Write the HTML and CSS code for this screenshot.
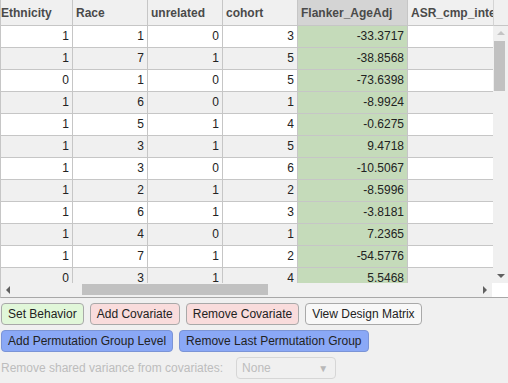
FILE: index.html
```html
<!DOCTYPE html>
<html lang="en">
<head>
  <meta charset="UTF-8">
  <title>Design</title>
  <link rel="stylesheet" href="styles.css">
</head>
<body>
  <div class="grid">
    <div class="grid-body">
      <div class="viewport">
        <table class="data">
          <colgroup>
            <col class="c-narrow1">
            <col class="c-mid">
            <col class="c-mid">
            <col class="c-mid">
            <col class="c-wide">
            <col class="c-last">
          </colgroup>
          <thead>
            <tr>
              <th class="first">Ethnicity</th>
              <th>Race</th>
              <th>unrelated</th>
              <th>cohort</th>
              <th class="sel">Flanker_AgeAdj</th>
              <th>ASR_cmp_internalizing</th>
            </tr>
          </thead>
          <tbody>
            <tr><td>1</td><td>1</td><td>0</td><td>3</td><td class="sel">-33.3717</td><td></td></tr>
            <tr><td>1</td><td>7</td><td>1</td><td>5</td><td class="sel">-38.8568</td><td></td></tr>
            <tr><td>0</td><td>1</td><td>0</td><td>5</td><td class="sel">-73.6398</td><td></td></tr>
            <tr><td>1</td><td>6</td><td>0</td><td>1</td><td class="sel">-8.9924</td><td></td></tr>
            <tr><td>1</td><td>5</td><td>1</td><td>4</td><td class="sel">-0.6275</td><td></td></tr>
            <tr><td>1</td><td>3</td><td>1</td><td>5</td><td class="sel">9.4718</td><td></td></tr>
            <tr><td>1</td><td>3</td><td>0</td><td>6</td><td class="sel">-10.5067</td><td></td></tr>
            <tr><td>1</td><td>2</td><td>1</td><td>2</td><td class="sel">-8.5996</td><td></td></tr>
            <tr><td>1</td><td>6</td><td>1</td><td>3</td><td class="sel">-3.8181</td><td></td></tr>
            <tr><td>1</td><td>4</td><td>0</td><td>1</td><td class="sel">7.2365</td><td></td></tr>
            <tr><td>1</td><td>7</td><td>1</td><td>2</td><td class="sel">-54.5776</td><td></td></tr>
            <tr><td>0</td><td>3</td><td>1</td><td>4</td><td class="sel">5.5468</td><td></td></tr>
          </tbody>
        </table>
      </div>
      <div class="vscroll">
        <div class="vs-head"></div>
        <div class="sb-btn"><span class="arrow up"></span></div>
        <div class="vs-track"><div class="vs-thumb"></div></div>
        <div class="sb-btn"><span class="arrow down"></span></div>
      </div>
    </div>
    <div class="hscroll">
      <div class="sb-btn"><span class="arrow left"></span></div>
      <div class="hs-track"><div class="hs-thumb"></div></div>
      <div class="sb-btn"><span class="arrow right"></span></div>
      <div class="corner"></div>
    </div>
  </div>

  <div class="controls">
    <div class="btn-row">
      <button class="btn green">Set Behavior</button>
      <button class="btn pink">Add Covariate</button>
      <button class="btn pink">Remove Covariate</button>
      <button class="btn plain">View Design Matrix</button>
    </div>
    <div class="btn-row">
      <button class="btn blue">Add Permutation Group Level</button>
      <button class="btn blue">Remove Last Permutation Group</button>
    </div>
    <div class="option-row">
      <span class="label">Remove shared variance from covariates:</span>
      <div class="select">
        <span>None</span>
        <span class="caret">&#9660;</span>
      </div>
    </div>
  </div>
</body>
</html>
```

FILE: styles.css
```css
* {
  margin: 0;
  padding: 0;
  box-sizing: border-box;
}
body {
  width: 508px;
  height: 383px;
  overflow: hidden;
  background: #f0f0f0;
  font: 12px "Liberation Sans", Arial, sans-serif;
  color: #222;
}

/* table */
.grid {
  border-left: 1px solid #c6c6c6;
  border-bottom: 1px solid #a8a8a8;
}
.grid-body {
  display: flex;
  height: 283px;
}
.viewport {
  width: 492px;
  overflow: hidden;
  background: #fff;
}
.data {
  table-layout: fixed;
  border-collapse: separate;
  border-spacing: 0;
  width: 527px;
}
.c-narrow1 { width: 72px; }
.c-mid { width: 75px; }
.c-wide { width: 110px; }
.c-last { width: 120px; }

.data th {
  height: 26px;
  background: #f0f0f0;
  color: #4a4a4a;
  font-weight: bold;
  text-align: left;
  padding: 0 3px;
  white-space: nowrap;
  overflow: hidden;
  border-right: 1px solid #c6c6c6;
  border-bottom: 1px solid #c6c6c6;
}
.data th.first {
  padding-left: 0;
}
.data th.sel {
  background: #d4d4d4;
}
.data td {
  height: 22px;
  line-height: 21px;
  text-align: right;
  padding: 0 3px;
  color: #222;
  border-right: 1px solid #c6c6c6;
  border-bottom: 1px solid #c6c6c6;
}
.data tbody tr:nth-child(even) td {
  background: #f0f0f0;
}
.data td.sel,
.data tbody tr:nth-child(even) td.sel {
  background: #c5dbba;
}

/* scrollbars */
.vscroll {
  width: 15px;
  display: flex;
  flex-direction: column;
  background: #f0f0f0;
}
.vs-head {
  height: 26px;
  border-left: 1px solid #d4d4d4;
  border-bottom: 1px solid #c6c6c6;
}
.sb-btn {
  width: 15px;
  height: 14px;
  display: flex;
  align-items: center;
  justify-content: center;
}
.vs-track {
  flex: 1;
  padding: 1px 0 0 1px;
}
.vs-thumb {
  width: 11px;
  height: 50px;
  background: #c1c1c1;
}
.arrow {
  width: 0;
  height: 0;
}
.arrow.up {
  border-left: 4px solid transparent;
  border-right: 4px solid transparent;
  border-bottom: 4px solid #c4c4c4;
}
.arrow.down {
  border-left: 4px solid transparent;
  border-right: 4px solid transparent;
  border-top: 4px solid #606060;
}
.arrow.left {
  border-top: 4px solid transparent;
  border-bottom: 4px solid transparent;
  border-right: 4px solid #606060;
}
.arrow.right {
  border-top: 4px solid transparent;
  border-bottom: 4px solid transparent;
  border-left: 4px solid #606060;
}
.hscroll {
  display: flex;
  height: 14px;
  background: #f0f0f0;
}
.hscroll .sb-btn {
  width: 14px;
}
.hs-track {
  flex: 1;
  padding: 1px 0 1px 67px;
}
.hs-thumb {
  width: 186px;
  height: 11px;
  background: #c1c1c1;
}
.corner {
  width: 16px;
  background: #fff;
}

/* controls */
.controls {
  padding: 5px 0 0 1px;
}
.btn-row {
  display: flex;
  gap: 6px;
  margin-bottom: 5px;
}
.btn {
  height: 22px;
  padding: 0 6px;
  border: 1px solid #a9a9a9;
  border-radius: 4px;
  font: 12px "Liberation Sans", Arial, sans-serif;
  color: #222;
  white-space: nowrap;
}
.btn.green { background: #e1f7d9; }
.btn.pink { background: #f9dcdc; }
.btn.plain { background: #f8f8f8; }
.btn.blue {
  background: #8aa8f6;
  border-color: #7b94d6;
}
.option-row {
  display: flex;
  align-items: center;
  gap: 13px;
}
.label {
  color: #bdbdbd;
}
.select {
  width: 100px;
  height: 22px;
  border: 1px solid #d6d6d6;
  border-radius: 4px;
  display: flex;
  align-items: center;
  justify-content: space-between;
  padding: 0 7px 0 5px;
  color: #bdbdbd;
}
.caret {
  font-size: 10px;
  color: #b8b8b8;
}
```
